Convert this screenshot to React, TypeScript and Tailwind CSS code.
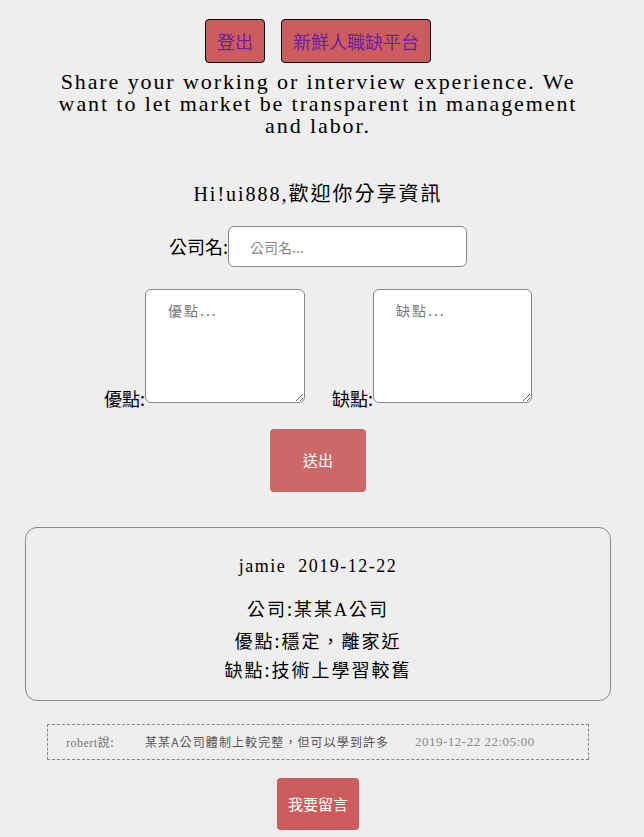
import React from 'react';

// shared class strings
const cjk = "font-['Noto_Sans_CJK_TC','Liberation_Sans',sans-serif]";
const serif = "font-['Liberation_Serif','Noto_Sans_CJK_TC',serif]";
const redBtn = `bg-[#cd5c5c] rounded ${cjk}`;

export default function App() {
  return (
    <div className={`min-h-[837px] bg-[#eeeeee] text-black ${serif}`}>
      <div className="w-[636px] flex flex-col items-center">
        {/* top buttons */}
        <div className="flex gap-4 pt-[19px]">
          <button className={`h-[44px] px-[11px] border border-black text-[18px] text-[#6b21a8] ${redBtn}`}>登出</button>
          <button className={`h-[44px] px-[11px] border border-black text-[18px] text-[#6b21a8] ${redBtn}`}>新鮮人職缺平台</button>
        </div>

        <p className="w-[524px] text-center text-[22px] leading-[22px] tracking-[1.9px] mt-[8px]">
          Share your working or interview experience. We want to let market be transparent in management and labor.
        </p>

        <h2 className="text-[20px] tracking-[2px] mt-[41px]">
          Hi!ui888,<span className={cjk}>歡迎你分享資訊</span>
        </h2>

        <form className={`flex flex-col items-center ${cjk}`} onSubmit={(e) => e.preventDefault()}>
          <div className="flex items-center mt-[17px]">
            <label className="text-[18px]">公司名:</label>
            <input
              placeholder="公司名..."
              className="w-[239px] h-[41px] bg-white border border-[#888] rounded-[6px] pl-[21px] text-[14px] placeholder:text-[#888] outline-none"
            />
          </div>

          <div className="flex items-end mt-[22px]">
            <label className="text-[18px] leading-[20px] mb-[-5px]">優點:</label>
            <textarea
              placeholder="優點..."
              className="w-[160px] h-[114px] bg-white border border-[#888] rounded-[6px] pt-[10px] pl-[22px] text-[14px] tracking-[2px] placeholder:text-[#777] outline-none"
            />
            <label className="text-[18px] leading-[20px] mb-[-5px] ml-[27px]">缺點:</label>
            <textarea
              placeholder="缺點..."
              className="w-[159px] h-[114px] bg-white border border-[#888] rounded-[6px] pt-[10px] pl-[22px] text-[14px] tracking-[2px] placeholder:text-[#777] outline-none"
            />
          </div>

          <button className="mt-[26px] w-[96px] h-[63px] bg-[#cd6868] rounded text-white text-[15px]">送出</button>
        </form>

        {/* post card */}
        <div className="mt-[35px] w-[586px] h-[174px] border border-[#888] rounded-[12px] flex flex-col items-center pt-[25px]">
          <div className="text-[18px] tracking-[1.5px]">jamie&nbsp;&nbsp;2019-12-22</div>
          <div className={`mt-[14px] text-[18px] tracking-[2px] leading-[29.5px] text-center ${cjk}`}>
            <div>
              公司:某某<span className={serif}>A</span>公司
            </div>
            <div>優點:穩定，離家近</div>
            <div>缺點:技術上學習較舊</div>
          </div>
        </div>

        {/* comment */}
        <div className="mt-[23px] w-[542px] h-[36px] border border-dashed border-[#888] flex items-center pl-[18px] text-[12px]">
          <span className="w-[79px] text-[#777] tracking-[0.5px]">
            robert<span className={cjk}>說:</span>
          </span>
          <span className={`w-[270px] text-[#555] tracking-[1.1px] ${cjk}`}>某某A公司體制上較完整，但可以學到許多</span>
          <span className="text-[13px] tracking-[0.5px] text-[#888]">2019-12-22 22:05:00</span>
        </div>

        <button className={`mt-[18px] w-[82px] h-[52px] text-white text-[15px] ${redBtn}`}>我要留言</button>
      </div>
    </div>
  );
}
